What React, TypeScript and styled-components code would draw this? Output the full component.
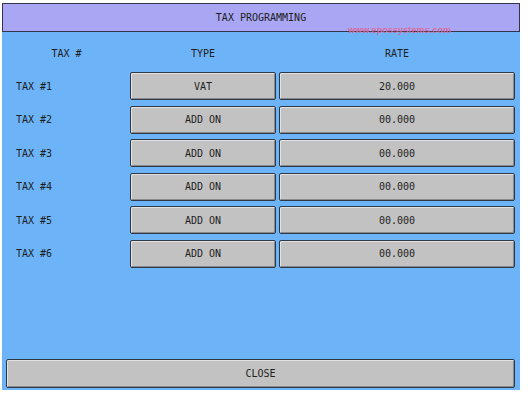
import React from "react";
import styled, { createGlobalStyle } from "styled-components";

const GlobalStyle = createGlobalStyle`
  html, body {
    margin: 0;
    padding: 0;
    background: #ffffff;
  }
  * {
    box-sizing: border-box;
  }
`;

const Screen = styled.div`
  position: relative;
  margin: 3px 0 0 2px;
  width: 518px;
  height: 387px;
  display: flex;
  flex-direction: column;
  font-family: "DejaVu Sans Mono", "Liberation Mono", monospace;
  font-size: 10px;
  color: #1e1e1e;
`;

const TitleBar = styled.div`
  height: 29px;
  background-color: #a9a6f3;
  border: 1px solid #33364a;
  display: flex;
  align-items: center;
  justify-content: center;
`;

const Watermark = styled.div`
  position: absolute;
  left: 346px;
  top: 22px;
  font-family: "Liberation Sans", Arial, sans-serif;
  font-size: 9px;
  line-height: 11px;
  font-weight: 700;
  letter-spacing: 0.1px;
  color: #e0628f;
  opacity: 0.85;
`;

const Body = styled.div`
  flex: 1;
  background-color: #6db3f7;
  padding: 11px 5px 2px 4px;
  display: flex;
  flex-direction: column;
`;

const Grid = styled.div`
  display: grid;
  grid-template-columns: 121px 146px 236px;
  grid-template-rows: 23.5px;
  grid-auto-rows: 28px;
  column-gap: 3px;
  row-gap: 5.5px;
`;

const HeadCell = styled.div`
  height: 20px;
  display: flex;
  align-items: center;
  justify-content: center;
`;

const Label = styled.div`
  display: flex;
  align-items: center;
  padding-left: 10px;
`;

const Key = styled.div<{ $tall?: boolean }>`
  height: ${(p) => (p.$tall ? "29px" : "28px")};
  background-color: #c2c2c2;
  border: 1px solid #2c3848;
  border-radius: 2px;
  box-shadow: inset 1px 1px 0 #e2e2e2, inset -1px -1px 0 #8a8a8a;
  display: flex;
  align-items: center;
  justify-content: center;
  white-space: pre;
`;

const Spacer = styled.div`
  flex: 1;
`;

const rows = [
  { type: "VAT", rate: "20.000" },
  { type: "ADD ON", rate: "00.000" },
  { type: "ADD ON", rate: "00.000" },
  { type: "ADD ON", rate: "00.000" },
  { type: "ADD ON", rate: "00.000" },
  { type: "ADD ON", rate: "00.000" },
];

export default function App() {
  return (
    <>
      <GlobalStyle />
      <Screen>
        <TitleBar>TAX PROGRAMMING</TitleBar>
        <Watermark>www.epossystems.com</Watermark>
        <Body>
          <Grid>
            <HeadCell>TAX #</HeadCell>
            <HeadCell>TYPE</HeadCell>
            <HeadCell>RATE</HeadCell>
            {rows.map((r, i) => (
              <React.Fragment key={i}>
                <Label>TAX #{i + 1}</Label>
                <Key>{r.type}</Key>
                <Key>{r.rate}</Key>
              </React.Fragment>
            ))}
          </Grid>
          <Spacer />
          <Key $tall>CLOSE</Key>
        </Body>
      </Screen>
    </>
  );
}
